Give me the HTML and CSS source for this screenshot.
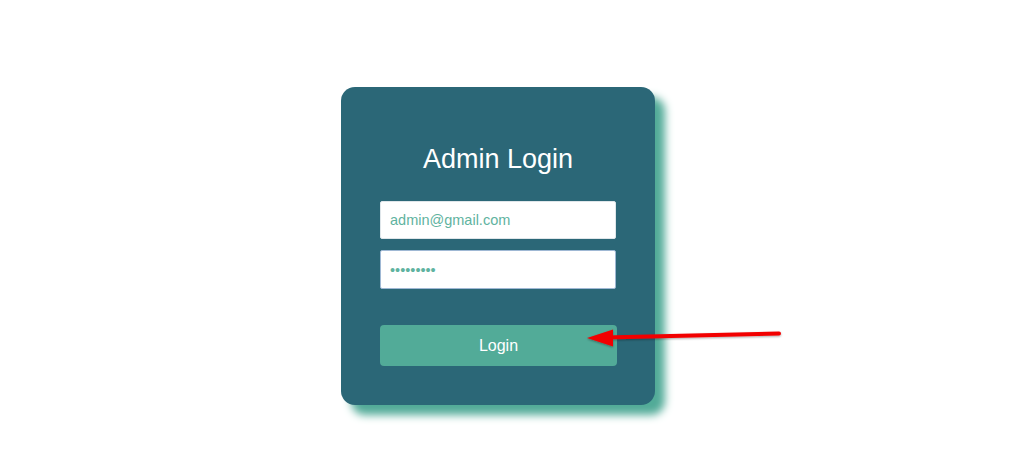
FILE: index.html
```html
<!DOCTYPE html>
<html>
<head>
<meta charset="utf-8">
<link rel="stylesheet" href="styles.css">
</head>
<body>
<div class="page">
  <form class="card">
    <h1 class="title">Admin Login</h1>
    <input class="field" type="text" value="admin@gmail.com">
    <input class="field field-focus" type="password" value="123456789">
    <button class="btn" type="button">Login</button>
  </form>
  <svg class="arrow" width="220" height="40" viewBox="570 318 220 40">
    <defs>
      <filter id="sh" x="-10%" y="-50%" width="120%" height="200%">
        <feDropShadow dx="0" dy="1" stdDeviation="1.2" flood-color="#000" flood-opacity="0.35"/>
      </filter>
    </defs>
    <g filter="url(#sh)">
      <line x1="779" y1="333.5" x2="605" y2="337.5" stroke="#f20000" stroke-width="4" stroke-linecap="round"/>
      <polygon points="587,338 613,329.5 613,346.5" fill="#f20000"/>
    </g>
  </svg>
</div>
</body>
</html>
```
FILE: styles.css
```css
* { box-sizing: border-box; }
html, body { margin: 0; padding: 0; background: #fff; }
body { font-family: "Liberation Sans", Arial, sans-serif; }
.page { position: relative; width: 1024px; height: 460px; padding-top: 87px; padding-left: 341px; }
.card {
  width: 314px;
  height: 318px;
  background: #2b6777;
  border-radius: 14px;
  box-shadow: 10px 10px 8px #52ab98;
  padding: 56px 39px 0 39px;
  display: flex;
  flex-direction: column;
}
.title {
  margin: 0 0 26px 0;
  font-weight: normal;
  font-size: 27px;
  line-height: 32px;
  color: #fff;
  text-align: center;
}
.field {
  display: block;
  width: 236px;
  height: 38px;
  margin: 0 0 11px 0;
  padding: 0 9px;
  border: 1px solid #dfe6ea;
  border-radius: 2px;
  background: #fff;
  color: #5fb3a0;
  font-family: "Liberation Sans", Arial, sans-serif;
  font-size: 14.5px;
  outline: none;
}
.field-focus { border-color: #9fb8d4; height: 39px; }
.btn {
  margin-top: 25px;
  width: 237px;
  height: 41px;
  border: none;
  border-radius: 4px;
  background: #52ab98;
  color: #fff;
  font-family: "Liberation Sans", Arial, sans-serif;
  font-size: 16px;
  padding: 0;
}
.arrow { position: absolute; left: 570px; top: 318px; }
```
